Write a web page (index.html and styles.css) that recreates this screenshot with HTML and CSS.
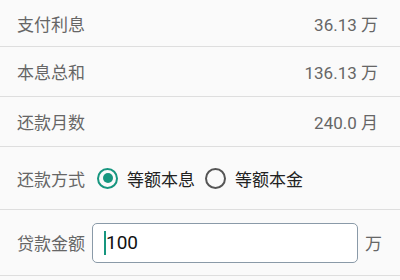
FILE: index.html
```html
<!DOCTYPE html>
<html lang="zh">
<head>
    <meta charset="UTF-8">
    <meta name="viewport" content="width=device-width, initial-scale=1.0">
    <title>房贷计算</title>
    <link rel="stylesheet" href="styles.css">
</head>
<body>
    <div class="list">
        <div class="row first">
            <span class="label">支付利息</span>
            <span class="value">36.13 万</span>
        </div>
        <div class="row">
            <span class="label">本息总和</span>
            <span class="value">136.13 万</span>
        </div>
        <div class="row">
            <span class="label">还款月数</span>
            <span class="value">240.0 月</span>
        </div>
        <div class="row mode">
            <span class="label">还款方式</span>
            <label class="radio checked"><span class="dot"></span>等额本息</label>
            <label class="radio"><span class="dot"></span>等额本金</label>
        </div>
        <div class="row amount">
            <span class="label">贷款金额</span>
            <div class="input"><span class="caret"></span>100</div>
            <span class="unit">万</span>
        </div>
    </div>
</body>
</html>
```

FILE: styles.css
```css
body {
    margin: 0;
    background: #fafafa;
    font-family: Roboto, "Noto Sans CJK SC", sans-serif;
    font-size: 17px;
    color: #666;
}

.row {
    display: flex;
    align-items: center;
    height: 49px;
    padding: 0 22px 0 17px;
    border-bottom: 1px solid #dedede;
}

.row.first {
    height: 46px;
}

.label {
    flex: none;
}

.value {
    margin-left: auto;
    color: #666;
}

.row.mode {
    height: 62px;
}

.radio {
    display: flex;
    align-items: center;
    color: #222;
    margin-left: 12px;
}

.radio + .radio {
    margin-left: 10px;
}

.dot {
    box-sizing: border-box;
    width: 21px;
    height: 21px;
    border: 2px solid #555;
    border-radius: 50%;
    margin-right: 9px;
    position: relative;
}

.radio.checked .dot {
    border-color: #17967f;
}

.radio.checked .dot::after {
    content: "";
    position: absolute;
    left: 3.5px;
    top: 3.5px;
    width: 10px;
    height: 10px;
    border-radius: 50%;
    background: #17967f;
}

.row.amount {
    height: 65px;
    padding-right: 18px;
}

.input {
    display: flex;
    align-items: center;
    box-sizing: border-box;
    height: 40px;
    flex: 1;
    margin-left: 7px;
    margin-right: 7px;
    padding-left: 11px;
    border: 1px solid #8a9aa8;
    border-radius: 5px;
    background: #fff;
    color: #111;
    font-size: 19px;
}

.caret {
    width: 2px;
    height: 24px;
    background: #17967f;
}

.unit {
    color: #666;
}
```
